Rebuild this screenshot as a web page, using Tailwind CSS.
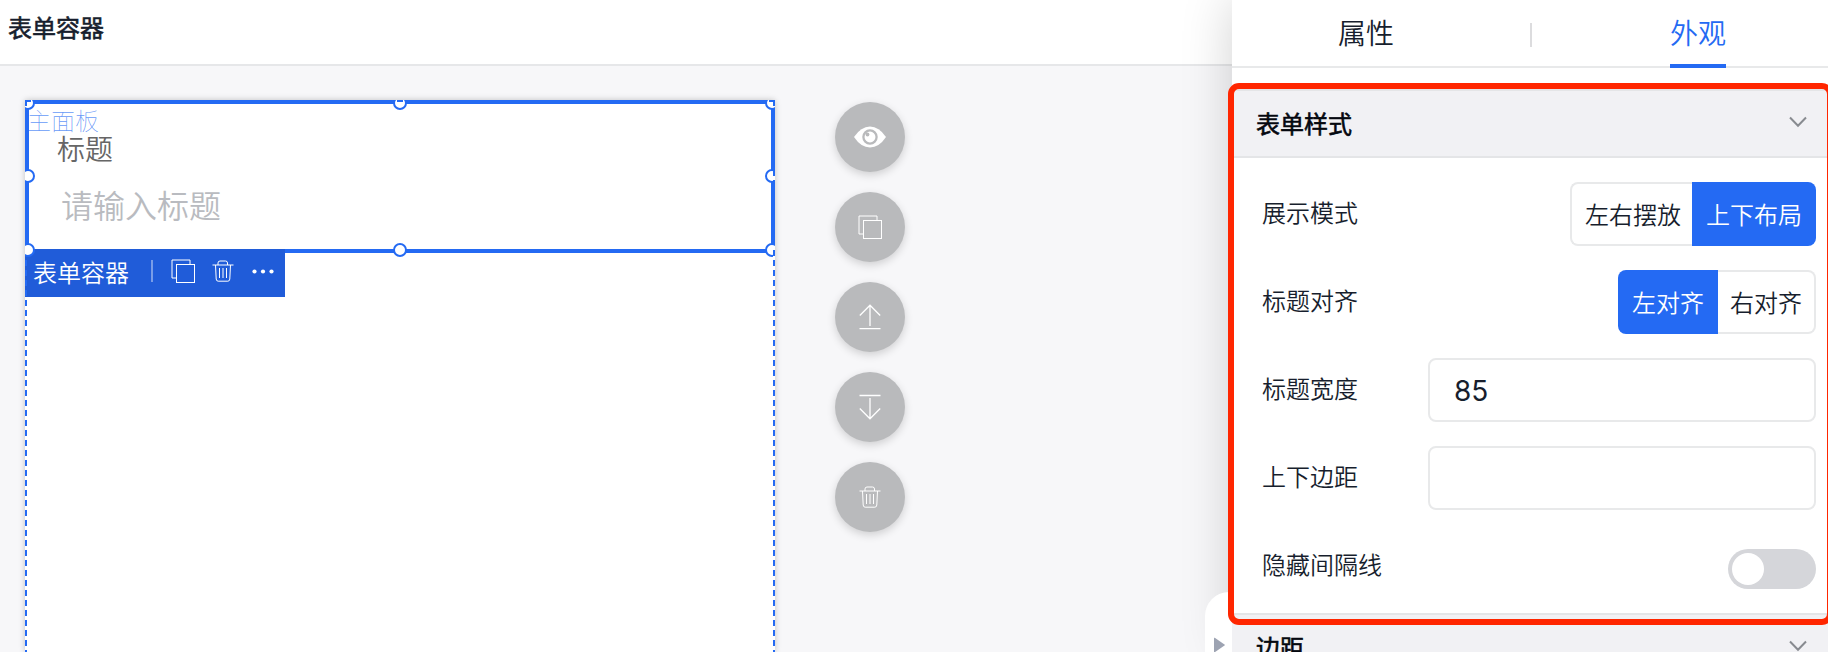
<!DOCTYPE html>
<html lang="zh-CN">
<head>
<meta charset="utf-8">
<title>表单容器</title>
<script src="https://cdn.jsdelivr.net/npm/@tailwindcss/browser@4"></script>
</head>
<body class="h-[652px] w-[1828px] overflow-hidden bg-white font-['Noto_Sans_CJK_SC',sans-serif] font-[350] text-[#171e2d]">
<svg class="hidden">
  <symbol id="copy" viewBox="0 0 24 24" fill="none" stroke="currentColor"><path d="M19 5V1H1v18h4"/><rect x="5.500" y="5.500" width="18" height="18"/></symbol>
  <symbol id="trash" viewBox="0 0 22 22" fill="none" stroke="currentColor"><path d="M.5 5h21M6 5V3q0-2 2-2h5.500q2 0 2 2v2M3.500 5l.7 14q.1 2.200 2 2.200h9.600q1.900 0 2-2.200l.7-14M7.500 8v10M11 8v10M14.500 8v10"/></symbol>
  <symbol id="chevron" viewBox="0 0 18 12" fill="none" stroke="currentColor" stroke-width="2"><path d="M1 1.500l8 8.200 8-8.200"/></symbol>
</svg>
<div class="relative flex h-[652px] overflow-hidden">
  <main class="flex w-[1232px] flex-col">
    <header class="flex h-[66px] shrink-0 items-center border-b-2 border-[#e6e7e9] bg-white pr-4 pb-2.5 pl-2">
      <h1 class="text-2xl leading-9 font-normal [-webkit-text-stroke:0.6px_#171e2d]">表单容器</h1>
    </header>
    <div class="flex h-[586px] items-start overflow-hidden bg-[#f7f7f9] pt-[34px] pl-[25px]">
      <section class="relative h-[552px] w-[750px] bg-white shadow-[0_0_6px_rgba(0,0,0,0.22)]">
        <div class="relative h-[153px] overflow-hidden border-4 border-[#246af3]">
          <p class="-mt-0.5 -ml-0.5 h-[30px] text-2xl leading-9 font-thin text-[#246af3]/70">主面板</p>
          <div class="-mt-[5px] pl-[28px] text-[28px] leading-[42px] text-[#666]">标题</div>
          <div class="mt-[11px] pl-8 text-[32px] leading-[48px] text-[#b9bbc0]">请输入标题</div>
        </div>
        <div class="absolute top-[149px] left-0 flex h-12 w-[260px] items-center bg-[#205cd9] pl-2 text-white">
          <span class="-mt-0.5 text-2xl leading-9">表单容器</span>
          <i class="ml-[22px] h-[22px] w-0.5 -translate-y-0.5 bg-white/40"></i>
          <svg class="ml-[18px] size-6 -translate-y-0.5"><use href="#copy"/></svg>
          <svg class="ml-[17px] size-[22px] -translate-y-0.5"><use href="#trash"/></svg>
          <svg class="ml-[18px] h-[5px] w-[22px] -translate-y-0.5 fill-white" viewBox="0 0 22 5"><circle cx="2.500" cy="2.500" r="2.100"/><circle cx="11" cy="2.500" r="2.100"/><circle cx="19.500" cy="2.500" r="2.100"/></svg>
        </div>
        <svg class="absolute inset-0 h-[552px] w-[750px]" viewBox="0 0 750 552" fill="none" stroke="#246af3" stroke-width="2">
          <g fill="#fff">
            <circle cx="3" cy="3" r="6"/><circle cx="375" cy="3" r="6"/><circle cx="747" cy="3" r="6"/>
            <circle cx="3" cy="76" r="6"/><circle cx="747" cy="76" r="6"/>
            <circle cx="3" cy="150" r="6"/><circle cx="375" cy="150" r="6"/><circle cx="747" cy="150" r="6"/>
          </g>
          <path d="M0 1H6M372 1h6M744 1h6M1 0v6M749 0v6M749 70v6M749 80v6"/>
          <path stroke="#fff" d="M1 72.500v4M749 76v4M1 146v3"/>
          <path stroke="#fff" d="M1 197V552M749 153V552"/>
          <path stroke-dasharray="6 4" d="M1 200V552M749 150V552"/>
          <path stroke-dasharray="6 4" d="M1 160V197"/>
        </svg>
      </section>
      <nav class="mt-0.5 ml-[60px] flex flex-col gap-5 text-white">
        <button class="flex size-[70px] items-center justify-center rounded-full bg-[#b9babc] shadow-[0_3px_8px_rgba(0,0,0,0.16)]">
          <svg class="h-[22px] w-8" viewBox="0 0 32 22"><path fill="#fff" d="M0 11Q7 .5 16 .5T32 11Q25 21.500 16 21.500T0 11Z"/><circle cx="16" cy="11" r="6.600" fill="none" stroke="#b9babc" stroke-width="2.300"/><circle cx="13.500" cy="8.500" r="1.900" fill="#b9babc"/></svg>
        </button>
        <button class="flex size-[70px] items-center justify-center rounded-full bg-[#b9babc] shadow-[0_3px_8px_rgba(0,0,0,0.16)]"><svg class="size-6"><use href="#copy"/></svg></button>
        <button class="flex size-[70px] items-center justify-center rounded-full bg-[#b9babc] shadow-[0_3px_8px_rgba(0,0,0,0.16)]"><svg class="h-[26px] w-[22px]" viewBox="0 0 22 26" fill="none" stroke="#fff" stroke-width="1.300"><path d="M11 22V1.500M.8 11.500L11 1.200l10.200 10.300M.5 24.700h21"/></svg></button>
        <button class="flex size-[70px] items-center justify-center rounded-full bg-[#b9babc] shadow-[0_3px_8px_rgba(0,0,0,0.16)]"><svg class="h-[26px] w-[22px]" viewBox="0 0 22 26" fill="none" stroke="#fff" stroke-width="1.300"><path d="M11 4v20.500M.8 14.500L11 24.800l10.200-10.300M.5 1.500h21"/></svg></button>
        <button class="flex size-[70px] items-center justify-center rounded-full bg-[#b9babc] shadow-[0_3px_8px_rgba(0,0,0,0.16)]"><svg class="size-[22px]"><use href="#trash"/></svg></button>
      </nav>
    </div>
  </main>

  <aside class="relative flex w-[596px] flex-col bg-white shadow-[0_0_48px_rgba(0,0,0,0.18)]">
    <div class="absolute top-[592px] -left-[27px] h-[60px] w-[27px] rounded-tl-3xl bg-white pt-[45px] pl-[9px]">
      <svg class="h-4 w-[11px] fill-[#9da3b2]" viewBox="0 0 11 16"><path d="M.8.800Q0 .3 0 1.500v13q0 1.200.8.7l9.700-6.600q.8-.6 0-1.200z"/></svg>
    </div>
    <div class="relative flex h-[68px] shrink-0 border-b-2 border-[#e8e9ea] text-[28px] leading-[64px]">
      <div class="w-[298px] pl-[106px]">属性</div>
      <i class="mt-[23px] h-6 w-0.5 bg-[#dcdcde]"></i>
      <div class="ml-[138px] h-[68px] w-14 border-b-4 border-[#246af3] text-[#246af3]">外观</div>
    </div>
    <div class="mt-[21px] flex h-[69px] shrink-0 items-center justify-between border-y-2 border-[#e4e5e7] bg-[#f1f1f4] pr-[21px] pl-6">
      <h2 class="-mt-0.5 text-2xl leading-9 font-normal text-[#05080f] [-webkit-text-stroke:0.6px_#05080f]">表单样式</h2>
      <svg class="h-3 w-[18px] -translate-y-0.5 text-[#888b90]"><use href="#chevron"/></svg>
    </div>
    <div class="flex h-[455px] shrink-0 flex-col gap-6 pt-6 pr-3 pl-[30px] text-2xl leading-9">
      <div class="flex h-16 items-center justify-between">
        <span class="-mt-1">展示模式</span>
        <div class="flex h-16 leading-[59px]">
          <div class="w-[122px] rounded-l-lg border-2 border-r-0 border-[#e8e9ea] pl-[13px]">左右摆放</div>
          <div class="w-[124px] rounded-r-lg bg-[#246af3] pt-0.5 pl-[14px] text-white">上下布局</div>
        </div>
      </div>
      <div class="flex h-16 items-center justify-between">
        <span class="-mt-1">标题对齐</span>
        <div class="flex h-16 leading-[59px]">
          <div class="w-[100px] rounded-l-lg bg-[#246af3] pt-0.5 pl-[14px] text-white">左对齐</div>
          <div class="w-[98px] rounded-r-lg border-2 border-l-0 border-[#e8e9ea] pl-3">右对齐</div>
        </div>
      </div>
      <div class="flex h-16 items-center justify-between">
        <span class="-mt-1">标题宽度</span>
        <div class="h-16 w-[388px] rounded-lg border-2 border-[#e8e9ea] pl-6 font-[Inter,sans-serif] text-[28px] leading-[62px] font-normal">85</div>
      </div>
      <div class="flex h-16 items-center justify-between">
        <span class="-mt-1">上下边距</span>
        <div class="h-16 w-[388px] rounded-lg border-2 border-[#e8e9ea]"></div>
      </div>
      <div class="flex h-16 items-center justify-between">
        <span class="-mt-1">隐藏间隔线</span>
        <div class="mt-1.5 h-10 w-[88px] rounded-full bg-[#d5d6da] p-1"><div class="size-8 rounded-full bg-white"></div></div>
      </div>
    </div>
    <div class="flex h-[39px] shrink-0 items-start justify-between overflow-hidden border-t-2 border-[#e4e5e7] bg-[#f1f1f4] pt-[13.500px] pr-[21px] pl-6">
      <h2 class="text-2xl leading-9 font-normal text-[#05080f] [-webkit-text-stroke:0.6px_#05080f]">边距</h2>
      <svg class="mt-[11px] h-3 w-[18px] text-[#888b90]"><use href="#chevron"/></svg>
    </div>
    <div class="absolute top-[83px] -left-[4.500px] h-[542px] w-[605px] rounded-[11px] border-6 border-[#ff2600]"></div>
  </aside>
</div>
</body>
</html>
